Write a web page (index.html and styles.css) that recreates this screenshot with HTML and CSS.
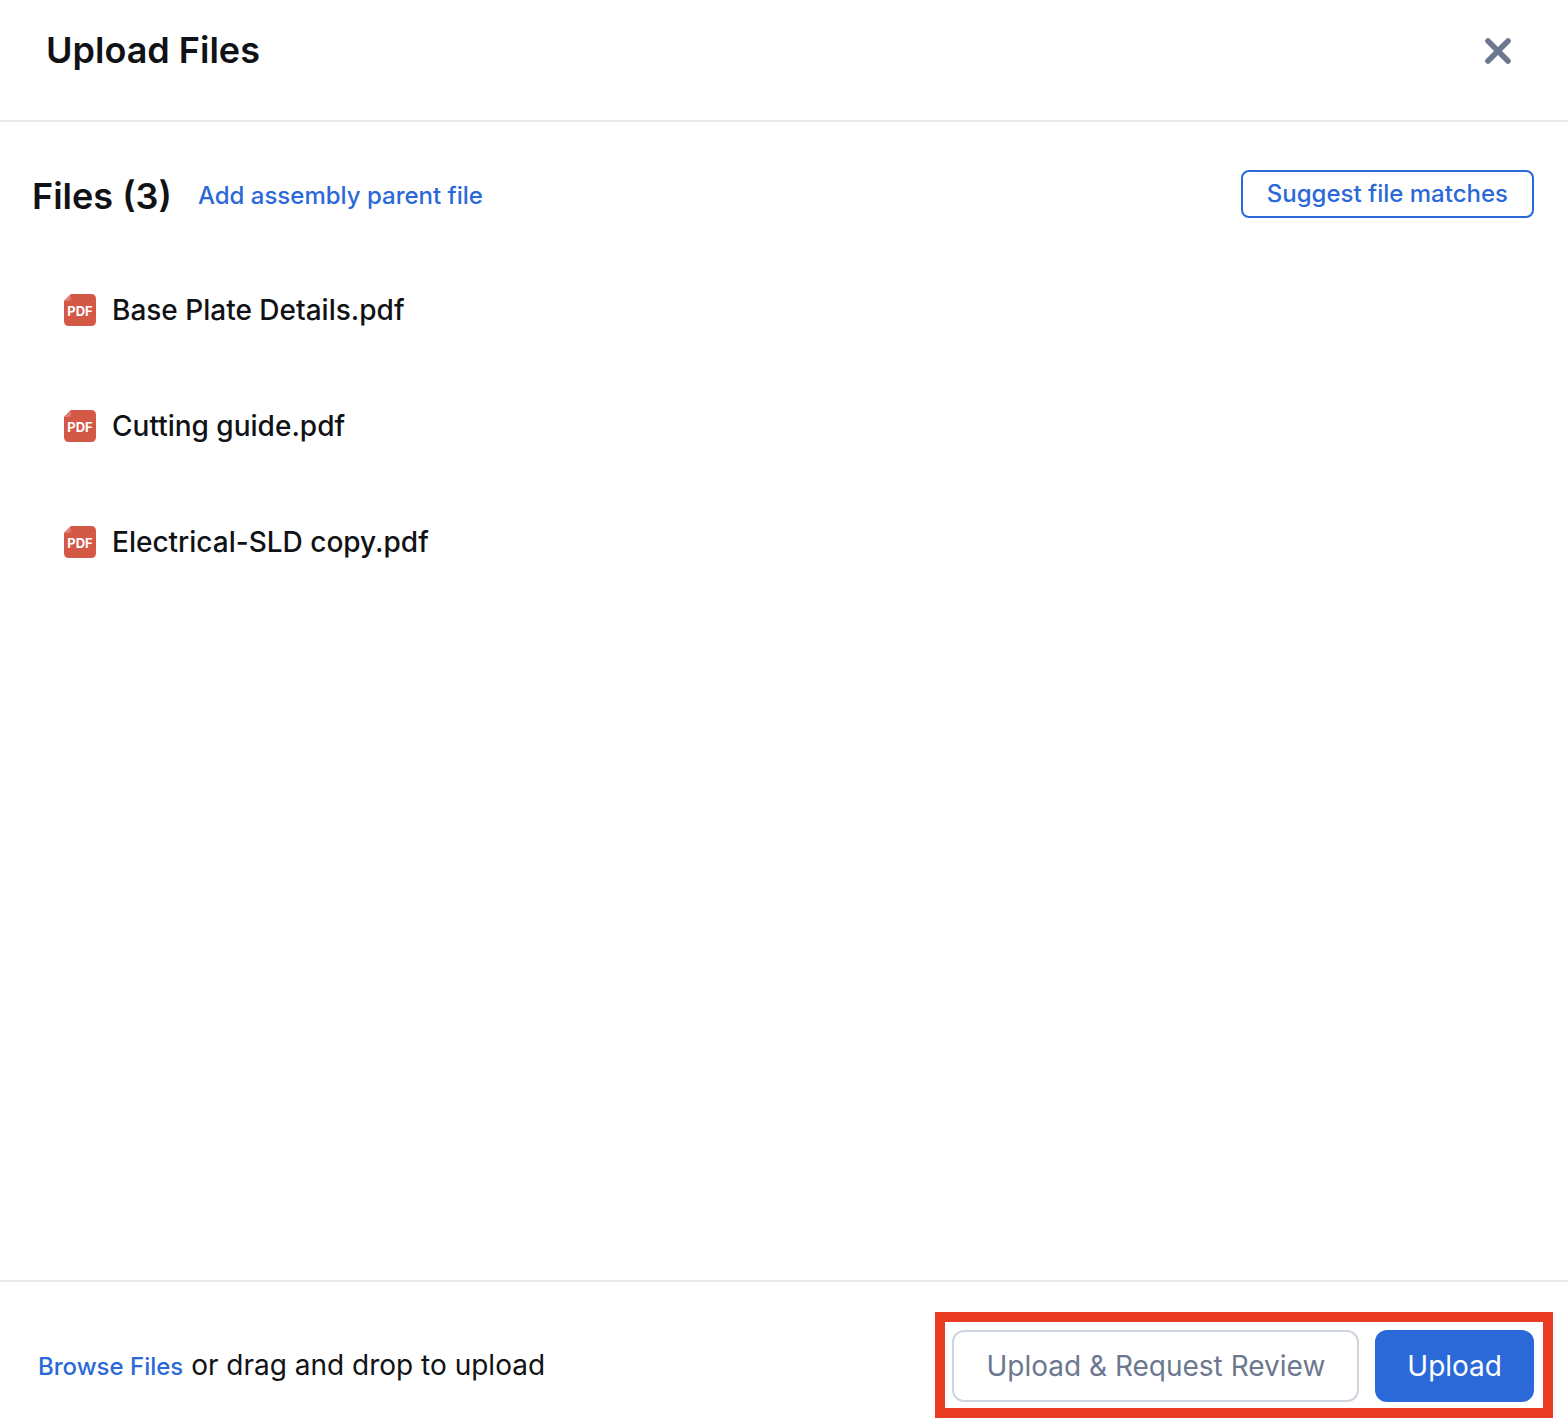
FILE: index.html
```html
<!DOCTYPE html>
<html lang="en">
<head>
<meta charset="utf-8">
<meta name="viewport" content="width=device-width, initial-scale=1">
<title>Upload Files</title>
<link rel="stylesheet" href="styles.css">
</head>
<body>
<div class="dialog" role="dialog" aria-labelledby="title">
  <header class="dialog-header">
    <h1 class="title" id="title">Upload Files</h1>
    <button class="close" type="button" aria-label="Close">
      <svg class="close-icon" viewBox="0 0 28 28" aria-hidden="true"><path d="M4 4L24 24M24 4L4 24"/></svg>
    </button>
  </header>
  <main class="content">
    <div class="toolbar">
      <h2 class="title">Files (3)</h2>
      <a class="link" href="#">Add assembly parent file</a>
      <button class="button suggest" type="button">Suggest file matches</button>
    </div>
    <ul class="files">
      <li class="file">
        <svg class="file-icon" viewBox="0 0 32 32" aria-hidden="true">
          <path class="sheet" d="M7 0H27Q32 0 32 5V27Q32 32 27 32H5Q0 32 0 27V7Z"/>
          <path class="fold" d="M7 0V4Q7 7 4 7H0Z"/>
          <text x="16" y="22" text-anchor="middle" class="pdf-label">PDF</text>
        </svg>
        Base Plate Details.pdf
      </li>
      <li class="file">
        <svg class="file-icon" viewBox="0 0 32 32" aria-hidden="true">
          <path class="sheet" d="M7 0H27Q32 0 32 5V27Q32 32 27 32H5Q0 32 0 27V7Z"/>
          <path class="fold" d="M7 0V4Q7 7 4 7H0Z"/>
          <text x="16" y="22" text-anchor="middle" class="pdf-label">PDF</text>
        </svg>
        Cutting guide.pdf
      </li>
      <li class="file">
        <svg class="file-icon" viewBox="0 0 32 32" aria-hidden="true">
          <path class="sheet" d="M7 0H27Q32 0 32 5V27Q32 32 27 32H5Q0 32 0 27V7Z"/>
          <path class="fold" d="M7 0V4Q7 7 4 7H0Z"/>
          <text x="16" y="22" text-anchor="middle" class="pdf-label">PDF</text>
        </svg>
        Electrical-SLD copy.pdf
      </li>
    </ul>
  </main>
  <footer class="dialog-footer">
    <p class="browse"><a class="link" href="#">Browse Files</a> or drag and drop to upload</p>
    <div class="actions">
      <button class="button secondary" type="button">Upload &amp; Request Review</button>
      <button class="button primary" type="button">Upload</button>
    </div>
  </footer>
</div>
</body>
</html>
```
FILE: styles.css
```css
* { box-sizing: border-box; }
body {
  margin: 0;
  background: #fff;
  color: #111215;
  font-family: Inter, "Liberation Sans", sans-serif;
}
.dialog { display: flex; flex-direction: column; min-height: 100vh; }
.dialog-header {
  display: flex;
  align-items: flex-start;
  justify-content: space-between;
  padding: 26px 54px 44px 46px;
  border-bottom: 2px solid #e7e8ee;
}
.title { margin: 0; font-size: 36px; font-weight: 600; line-height: 48px; }
.close {
  display: flex;
  align-items: center;
  justify-content: center;
  width: 32px;
  height: 50px;
  padding: 0;
  border: 0;
  background: none;
}
.close-icon { width: 28px; height: 28px; fill: none; stroke: #6b7890; stroke-width: 5.6; stroke-linecap: round; }
.content { flex: 1; padding: 48px 34px 48px 32px; }
.toolbar { display: flex; align-items: center; height: 52px; }
.link { color: #2b69d9; font-size: 24px; font-weight: 500; text-decoration: none; }
.toolbar .link { margin-left: 26px; padding-bottom: 2px; }
.button { border: 2px solid; border-radius: 12px; font-family: inherit; font-size: 28px; font-weight: 400; white-space: nowrap; }
.suggest {
  align-self: flex-start;
  height: 48px;
  margin-left: auto;
  padding: 0 24px 2px;
  border-color: #2b69d9;
  border-radius: 8px;
  background: #fff;
  color: #2b69d9;
  font-size: 24px;
  font-weight: 500;
}
.files { margin: 30px 0 0; padding: 0 32px; list-style: none; }
.file { display: flex; align-items: center; gap: 16px; height: 116px; font-size: 28px; font-weight: 500; }
.file-icon { width: 32px; height: 32px; }
.sheet { fill: #d45846; }
.fold { fill: #e07d70; }
.pdf-label { fill: #fff; font-size: 13px; font-weight: 700; }
.dialog-footer {
  display: flex;
  align-items: center;
  justify-content: space-between;
  padding: 30px 15px 2px 38px;
  border-top: 2px solid #e7e8ee;
}
.browse { margin: 0; padding-top: 2px; font-size: 28px; line-height: 40px; }
.actions { display: flex; gap: 16px; padding: 8px 9px 6px 7px; border: 10px solid #ea3d24; }
.actions .button { height: 72px; }
.secondary { padding: 0 32px; border-color: #cfd5df; background: #fff; color: #6b7890; }
.primary { padding: 0 30px; border-color: #2b69d9; background: #2b69d9; color: #fff; }
```
